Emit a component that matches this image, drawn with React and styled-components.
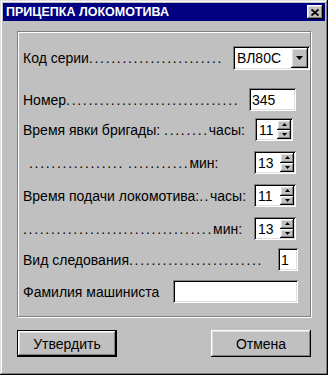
import React from "react";
import styled, { createGlobalStyle } from "styled-components";

const Global = createGlobalStyle`
  html, body {
    margin: 0;
    padding: 0;
    background: #c0c0c0;
  }
  body {
    font-family: "Liberation Sans", Arial, sans-serif;
  }
`;

const raised = `
  background: #c0c0c0;
  box-shadow: inset -1px -1px #000, inset 1px 1px #fff,
    inset -2px -2px #808080, inset 2px 2px #dfdfdf;
`;

const sunken = `
  background: #fff;
  box-shadow: inset 1px 1px #808080, inset -1px -1px #fff,
    inset 2px 2px #000, inset -2px -2px #dfdfdf;
`;

const Window = styled.div`
  width: 328px;
  height: 375px;
  box-sizing: border-box;
  padding: 3px;
  background: #c0c0c0;
  box-shadow: inset -1px -1px #000, inset 1px 1px #dfdfdf,
    inset -2px -2px #808080, inset 2px 2px #fff;
  display: flex;
  flex-direction: column;
`;

const TitleBar = styled.div`
  height: 18px;
  background: #000080;
  color: #fff;
  display: flex;
  align-items: center;
  justify-content: space-between;
  padding: 0 2px 0 3px;
  font-weight: 700;
  font-size: 12.5px;
  white-space: nowrap;
`;

const CloseBtn = styled.div`
  ${raised}
  width: 16px;
  height: 14px;
  display: flex;
  align-items: center;
  justify-content: center;
`;

const Body = styled.div`
  padding: 10px 14px 0;
`;

const Group = styled.div`
  border: 1px solid #808080;
  box-shadow: inset 1px 1px #fff, 1px 1px #fff;
  padding: 14px 0 13px 5px;
`;

const Row = styled.div`
  display: flex;
  align-items: center;
  height: ${(p) => p.$h || 23}px;
  margin-top: ${(p) => p.$mt || 0}px;
  padding-right: ${(p) => p.$mr || 0}px;
  padding-left: ${(p) => p.$pl || 0}px;
`;

const Label = styled.div`
  flex: 1;
  font-size: 14px;
  color: #000;
  white-space: nowrap;
`;

const Dots = styled.span`
  letter-spacing: ${(p) => p.$ls || 1.7}px;
`;

const Field = styled.div`
  ${sunken}
  width: ${(p) => p.$w}px;
  height: 23px;
  box-sizing: border-box;
  padding: 0 3px;
  display: flex;
  align-items: center;
  font-size: 14px;
  color: #000;
`;

const Combo = styled.div`
  ${sunken}
  width: 77px;
  height: 24px;
  box-sizing: border-box;
  padding: 2px;
  display: flex;
  align-items: center;
  font-size: 14px;
`;

const ComboText = styled.div`
  flex: 1;
  padding-left: 2px;
`;

const DropBtn = styled.div`
  ${raised}
  width: 17px;
  height: 20px;
  display: flex;
  align-items: center;
  justify-content: center;
`;

const Spin = styled.div`
  ${sunken}
  width: ${(p) => p.$w}px;
  height: 23px;
  box-sizing: border-box;
  padding: 2px 2px 2px 4px;
  display: flex;
  align-items: center;
  font-size: 14px;
`;

const SpinValue = styled.div`
  flex: 1;
`;

const SpinBtns = styled.div`
  display: flex;
  flex-direction: column;
  width: 14px;
  height: 19px;
`;

const SpinBtn = styled.div`
  ${raised}
  flex: 1;
  display: flex;
  align-items: center;
  justify-content: center;
`;

const Buttons = styled.div`
  display: flex;
  justify-content: space-between;
  margin-top: 13px;
`;

const Button = styled.div`
  ${raised}
  width: 100px;
  height: 27px;
  box-sizing: border-box;
  display: flex;
  align-items: center;
  justify-content: center;
  font-size: 14px;
  color: #000;
  ${(p) =>
    p.$default &&
    `
    box-shadow: inset 0 0 0 1px #000, inset -2px -2px #000, inset 2px 2px #fff,
      inset -3px -3px #808080, inset 3px 3px #dfdfdf;
  `}
`;

const Arrow = ({ up, w = 5 }) => (
  <svg width={w} height={Math.ceil(w / 2)} viewBox={`0 0 ${w} ${Math.ceil(w / 2)}`}>
    <polygon
      points={
        up
          ? `${w / 2},0 ${w},${Math.ceil(w / 2)} 0,${Math.ceil(w / 2)}`
          : `0,0 ${w},0 ${w / 2},${Math.ceil(w / 2)}`
      }
      fill="#000"
    />
  </svg>
);

const Spinner = ({ value, w }) => (
  <Spin $w={w}>
    <SpinValue>{value}</SpinValue>
    <SpinBtns>
      <SpinBtn>
        <Arrow up w={5} />
      </SpinBtn>
      <SpinBtn>
        <Arrow w={5} />
      </SpinBtn>
    </SpinBtns>
  </Spin>
);

const dots = (n) => ".".repeat(n);

export default function App() {
  return (
    <>
      <Global />
      <Window>
        <TitleBar>
          ПРИЦЕПКА ЛОКОМОТИВА
          <CloseBtn>
            <svg width="8" height="7" viewBox="0 0 8 7">
              <path d="M0.5 0.5 L7.5 6.5 M7.5 0.5 L0.5 6.5" stroke="#000" strokeWidth="1.8" />
            </svg>
          </CloseBtn>
        </TitleBar>
        <Body>
          <Group>
            <Row $h={24}>
              <Label>
                Код серии<Dots>{dots(24)}</Dots>
              </Label>
              <Combo>
                <ComboText>ВЛ80С</ComboText>
                <DropBtn>
                  <Arrow w={7} />
                </DropBtn>
              </Combo>
            </Row>
            <Row $mt={18} $mr={14}>
              <Label>
                Номер<Dots>{dots(31)}</Dots>
              </Label>
              <Field $w={47}>345</Field>
            </Row>
            <Row $mt={7} $mr={17}>
              <Label>
                Время явки бригады: <Dots>{dots(8)}</Dots>часы:
              </Label>
              <Spinner value="11" w={38} />
            </Row>
            <Row $mt={10} $mr={14} $pl={6}>
              <Label>
                <Dots>{dots(17)}</Dots> <Dots>{dots(11)}</Dots>мин:
              </Label>
              <Spinner value="13" w={42} />
            </Row>
            <Row $mt={10} $mr={14}>
              <Label>
                Время подачи локомотива:<Dots $ls={1.5}>{dots(2)}</Dots>часы:
              </Label>
              <Spinner value="11" w={42} />
            </Row>
            <Row $mt={10} $mr={14}>
              <Label>
                <Dots>{dots(34)}</Dots>мин:
              </Label>
              <Spinner value="13" w={42} />
            </Row>
            <Row $mt={8} $mr={12}>
              <Label>
                Вид следования<Dots>{dots(24)}</Dots>
              </Label>
              <Field $w={20}>1</Field>
            </Row>
            <Row $mt={9} $mr={12}>
              <Label>Фамилия машиниста</Label>
              <Field $w={125} />
            </Row>
          </Group>
          <Buttons>
            <Button $default>Утвердить</Button>
            <Button>Отмена</Button>
          </Buttons>
        </Body>
      </Window>
    </>
  );
}
